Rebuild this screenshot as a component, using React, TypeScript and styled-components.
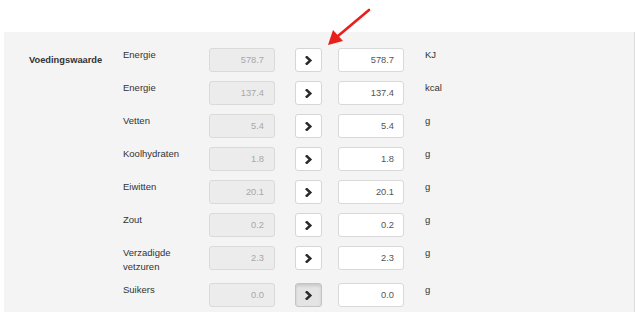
import React from "react";
import styled, { createGlobalStyle } from "styled-components";

const Global = createGlobalStyle`
  html, body { margin: 0; padding: 0; background: #fff; }
  body { font-family: "Liberation Sans", Arial, Helvetica, sans-serif; font-size: 9.5px; color: #333; }
`;

const Page = styled.div`
  position: relative;
  padding-top: 32px;
  padding-left: 4px;
  width: 631px;
  height: 280px;
  overflow: hidden;
`;

const Panel = styled.div`
  display: flex;
  background: #f4f4f4;
  border-right: 1px solid #dcdcdc;
  padding: 16px 0 20px 25px;
  min-height: 300px;
  box-sizing: border-box;
`;

const SectionLabel = styled.div`
  width: 94px;
  flex: none;
  font-weight: bold;
  font-size: 9.3px;
  line-height: 14px;
  padding-top: 5px;
  color: #333;
`;

const Rows = styled.div`
  display: flex;
  flex-direction: column;
  gap: 9px;
`;

const Row = styled.div`
  display: grid;
  grid-template-columns: 86px 66px 20px 27px 16px 66px 21px auto;
  align-items: start;
`;

const FieldLabel = styled.div`
  line-height: 14px;
  color: #333;
`;

const Input = styled.div<{ $disabled?: boolean }>`
  box-sizing: border-box;
  height: 24px;
  border: 1px solid ${(p) => (p.$disabled ? "#dadada" : "#d9d9d9")};
  border-radius: 3px;
  background: ${(p) => (p.$disabled ? "#ececec" : "#fff")};
  color: ${(p) => (p.$disabled ? "#a8a8a8" : "#555")};
  text-align: right;
  padding-right: ${(p) => (p.$disabled ? "10px" : "9px")};
  line-height: 23px;
  font-size: 9.3px;
`;

const Button = styled.div<{ $active?: boolean }>`
  box-sizing: border-box;
  height: 24px;
  border: 1px solid ${(p) => (p.$active ? "#c4c4c4" : "#d6d6d6")};
  border-radius: 3px;
  background: ${(p) => (p.$active ? "#e4e4e4" : "#fff")};
  box-shadow: ${(p) => (p.$active ? "inset 0 2px 3px rgba(0,0,0,0.12)" : "none")};
  display: flex;
  align-items: center;
  justify-content: center;
`;

const Unit = styled.div`
  line-height: 14px;
  color: #333;
`;

const Spacer = styled.div``;

const Arrow = styled.svg`
  position: absolute;
  left: 322px;
  top: 6px;
`;

const Chevron = () => (
  <svg width="8" height="9" viewBox="0 0 8 9">
    <polyline points="1.8,1.2 5.3,4.5 1.8,7.8" fill="none" stroke="#2b2b2b" strokeWidth="2.5" strokeLinecap="square" strokeLinejoin="miter" />
  </svg>
);

const data: { label: React.ReactNode; value: string; unit: string; active?: boolean }[] = [
  { label: "Energie", value: "578.7", unit: "KJ" },
  { label: "Energie", value: "137.4", unit: "kcal" },
  { label: "Vetten", value: "5.4", unit: "g" },
  { label: "Koolhydraten", value: "1.8", unit: "g" },
  { label: "Eiwitten", value: "20.1", unit: "g" },
  { label: "Zout", value: "0.2", unit: "g" },
  { label: <>Verzadigde<br />vetzuren</>, value: "2.3", unit: "g" },
  { label: "Suikers", value: "0.0", unit: "g", active: true },
];

export default function App() {
  return (
    <Page>
      <Global />
      <Panel>
        <SectionLabel>Voedingswaarde</SectionLabel>
        <Rows>
          {data.map((d, i) => (
            <Row key={i}>
              <FieldLabel>{d.label}</FieldLabel>
              <Input $disabled>{d.value}</Input>
              <Spacer />
              <Button $active={d.active}><Chevron /></Button>
              <Spacer />
              <Input>{d.value}</Input>
              <Spacer />
              <Unit>{d.unit}</Unit>
            </Row>
          ))}
        </Rows>
      </Panel>
      <Arrow width="56" height="44" viewBox="0 0 56 44">
        <line x1="47" y1="4" x2="16" y2="30" stroke="#e8201c" strokeWidth="2.6" strokeLinecap="round" />
        <polygon points="6,39 11,24 21,35" fill="#e8201c" />
      </Arrow>
    </Page>
  );
}
